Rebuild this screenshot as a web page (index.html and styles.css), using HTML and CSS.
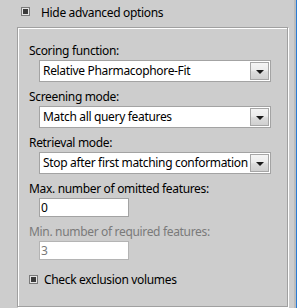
FILE: index.html
```html
<!DOCTYPE html>
<html>
<head>
<meta charset="utf-8">
<link rel="stylesheet" href="styles.css">
</head>
<body>
<div class="window">
  <div class="main">
    <div class="check-row top-row"><span class="cb"><span class="cb-mark"></span></span><span class="cb-text">Hide advanced options</span></div>
    <div class="group">
      <div class="lbl first">Scoring function:</div>
      <div class="combo"><span class="combo-text">Relative Pharmacophore-Fit</span><span class="combo-btn"><span class="arrow"></span></span></div>
      <div class="lbl">Screening mode:</div>
      <div class="combo"><span class="combo-text">Match all query features</span><span class="combo-btn"><span class="arrow"></span></span></div>
      <div class="lbl">Retrieval mode:</div>
      <div class="combo"><span class="combo-text">Stop after first matching conformation</span><span class="combo-btn"><span class="arrow"></span></span></div>
      <div class="lbl">Max. number of omitted features:</div>
      <div class="field">0</div>
      <div class="lbl disabled">Min. number of required features:</div>
      <div class="field disabled">3</div>
      <div class="check-row inner-row"><span class="cb small-gap"><span class="cb-mark"></span></span><span class="cb-text">Check exclusion volumes</span></div>
    </div>
  </div>
  <div class="edge"></div>
  <div class="blue"></div>
</div>
</body>
</html>
```

FILE: styles.css
```css
html, body {
  margin: 0;
  padding: 0;
}
body {
  width: 297px;
  height: 308px;
  overflow: hidden;
  font-family: "Noto Sans", "Open Sans", sans-serif;
  font-size: 12px;
  letter-spacing: -0.33px;
  color: #000;
}
.window {
  display: flex;
  height: 308px;
  background: #cdcdcd;
}
.main {
  width: 294px;
  flex: none;
}
.edge {
  width: 2px;
  flex: none;
  background: #bcbcbc;
}
.blue {
  width: 1px;
  flex: none;
  background: #2a7bd3;
}
.check-row {
  display: flex;
  align-items: flex-start;
  height: 16px;
  line-height: 16px;
  white-space: nowrap;
}
.top-row {
  margin: 5px 0 0 21px;
}
.cb {
  flex: none;
  width: 9px;
  height: 9px;
  box-sizing: border-box;
  border: 1px solid #7a7a7a;
  background: #e4e4e4;
  padding: 1px;
  margin-top: 2px;
  margin-right: 11px;
}
.cb.small-gap {
  margin-top: 3px;
  margin-right: 6px;
}
.cb-mark {
  display: block;
  width: 5px;
  height: 5px;
  background: #3a3a3a;
}
.group {
  margin: 6px 0 0 17px;
  width: 271px;
  height: 280px;
  box-sizing: border-box;
  border: 1px solid #a0a0a0;
  box-shadow: inset 1px 1px 0 #fff, 1px 1px 0 #fff;
  padding: 15px 0 0 11px;
}
.lbl {
  height: 16px;
  line-height: 16px;
  white-space: nowrap;
  margin-top: 7px;
}
.lbl.first {
  margin-top: 0;
}
.lbl.disabled {
  margin-top: 7px;
  color: #7a7a7a;
}
.combo {
  margin: 1px 0 0 10px;
  width: 232px;
  height: 22px;
  box-sizing: border-box;
  border: 1px solid #a3a3a3;
  background: #fff;
  display: flex;
  align-items: stretch;
}
.combo-text {
  flex: 1;
  padding-left: 3px;
  line-height: 20px;
  white-space: nowrap;
  overflow: hidden;
}
.combo-btn {
  flex: none;
  width: 19px;
  margin: 1px 1px 1px 0;
  box-sizing: border-box;
  border: 1px solid #a6a6a6;
  background: linear-gradient(#f4f4f4, #ececec 45%, #dcdcdc 55%, #d0d0d0);
  display: flex;
  align-items: center;
  justify-content: center;
}
.arrow {
  width: 0;
  height: 0;
  border-left: 4px solid transparent;
  border-right: 4px solid transparent;
  border-top: 4px solid #1a1a1a;
  margin-top: 1px;
}
.field {
  margin: 1px 0 0 10px;
  width: 90px;
  height: 19px;
  box-sizing: border-box;
  border: 1px solid #a3a3a3;
  background: #fff;
  padding-left: 1px;
  line-height: 18px;
}
.field.disabled {
  color: #7a7a7a;
  border-color: #b4b4b4;
}
.inner-row {
  margin-top: 12px;
}
```
